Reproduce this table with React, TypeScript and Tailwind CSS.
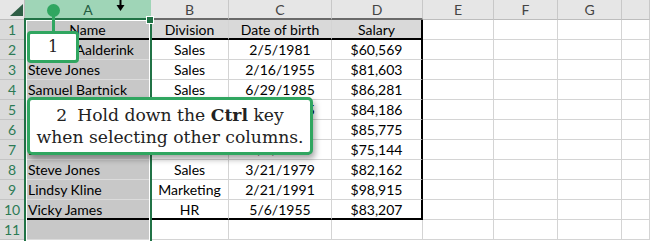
const columns = ['A', 'B', 'C', 'D', 'E', 'F', 'G', 'H'];

const sheetRows = [
  ['Name', 'Division', 'Date of birth', 'Salary'],
  ['Samuel Aalderink', 'Sales', '2/5/1981', '$60,569'],
  ['Steve Jones', 'Sales', '2/16/1955', '$81,603'],
  ['Samuel Bartnick', 'Sales', '6/29/1985', '$86,281'],
  ['Mark Tanner', 'Marketing', '4/12/1975', '$84,186'],
  ['Anna Lopez', 'HR', '9/3/1982', '$85,775'],
  ['Dale Hart', 'Sales', '1/8/1990', '$75,144'],
  ['Steve Jones', 'Sales', '3/21/1979', '$82,162'],
  ['Lindsy Kline', 'Marketing', '2/21/1991', '$98,915'],
  ['Vicky James', 'HR', '5/6/1955', '$83,207'],
  ['', '', '', ''],
];

function cellClass(r: number, c: number) {
  let cls = 'flex items-center whitespace-nowrap border-r border-b border-[#d4d4d4]';
  if (c === 0) {
    cls += ' bg-[#c8c8c8] border-b-[#dcdcdc] border-r-transparent';
    cls += r === 0 ? ' justify-center' : ' justify-start pl-[3px]';
  } else if (c <= 3) {
    cls += ' justify-center';
  }
  if (r === 0 && c >= 1 && c <= 3) cls += ' bg-[#d9d9d9]';
  if ((r === 0 || r === 9) && c <= 3) cls += ' border-b-2 border-b-black';
  if (c === 3 && r <= 9) cls += ' border-r-2 border-r-black';
  return cls;
}

export default function App() {
  return (
    <div className="relative w-[650px] h-[241px] overflow-hidden bg-white font-['Lato',sans-serif] text-[14px] text-black">
      <div className="grid grid-cols-[25px_126px_78px_103px_91px_71px_64px_64px_28px] auto-rows-[20px]">
        {/* corner */}
        <div className="relative bg-[#e6e6e6] border-r border-b border-[#bdbdbd]">
          <svg className="absolute left-[10px] top-[4px]" width="13" height="12" viewBox="0 0 13 12">
            <polygon points="13,0 13,12 0,12" fill="#2e5e45" />
          </svg>
        </div>
        {columns.map((col, i) =>
          i === 0 ? (
            <div
              key={col}
              className="flex items-center justify-center bg-[#9fd5b7] text-[#245c40] border-b-2 border-[#217346]"
            >
              {col}
            </div>
          ) : (
            <div
              key={col}
              className={`flex items-center justify-center bg-[#e6e6e6] text-[#444] border-r border-[#c8c8c8] ${
                i <= 3 ? 'border-b-2 border-b-[#6a6a6a]' : 'border-b border-b-[#bdbdbd]'
              }`}
            >
              {i === 7 ? '' : col}
            </div>
          ),
        )}

        {sheetRows.map((row, r) => (
          <div key={r} className="contents">
            <div className="flex items-center justify-center bg-[#dadada] text-[#2c7a55] border-r border-b border-[#c4c4c4]">
              {r + 1}
            </div>
            {[0, 1, 2, 3, 4, 5, 6, 7].map(c => (
              <div key={c} className={cellClass(r, c)}>
                {c <= 3 ? row[c] : ''}
              </div>
            ))}
          </div>
        ))}
      </div>

      {/* column A selection */}
      <div className="absolute left-[24px] top-[18px] w-[128px] h-[240px] border-2 border-[#217346] shadow-[inset_0_0_0_1px_#fff] pointer-events-none" />
      <div className="absolute left-[147px] top-[17px] w-[6px] h-[6px] bg-[#217346] outline outline-1 outline-white" />

      {/* column select cursor */}
      <svg className="absolute left-[116px] top-0" width="9" height="12" viewBox="0 0 9 12">
        <rect x="3.5" y="0" width="2" height="6" fill="#000" />
        <polygon points="0.5,5 8.5,5 4.5,11" fill="#000" />
      </svg>

      {/* callout 1 */}
      <div className="absolute left-[27px] top-[4px] w-[52px] flex flex-col items-center">
        <div className="w-[13px] h-[13px] rounded-full bg-[#30a660]" />
        <div className="w-[3px] h-[15px] -mt-px bg-[#30a660]" />
        <div className="w-[52px] h-[32px] rounded-[4px] border-[3px] border-[#30a660] bg-white flex items-center justify-center font-['DejaVu_Serif',serif] text-[16px] text-[#222]">
          1
        </div>
      </div>

      {/* callout 2 */}
      <div className="absolute left-[27px] top-[97px] w-[286px] h-[58px] rounded-[5px] border-[3px] border-[#30a660] bg-white shadow-[2px_4px_6px_rgba(0,0,0,0.35)] flex flex-col items-center justify-center font-['DejaVu_Serif',serif] text-[17.2px] leading-[22px] text-[#222]">
        <div>
          <span className="mr-[10px]">2</span>Hold down the <b>Ctrl</b> key
        </div>
        <div>when selecting other columns.</div>
      </div>
    </div>
  );
}
